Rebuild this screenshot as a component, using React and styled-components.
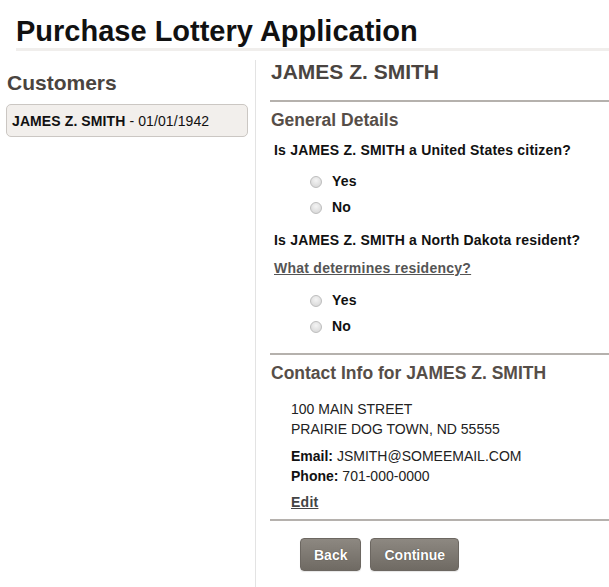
import React from 'react';
import styled, {createGlobalStyle} from 'styled-components';

const GlobalStyle = createGlobalStyle`
  html, body {
    margin: 0;
    padding: 0;
    background: #fff;
  }
  body {
    font-family: "Liberation Sans", Arial, sans-serif;
    font-size: 14px;
    color: #111;
  }
`;

const Page = styled.div`
  display: flex;
  flex-direction: column;
  min-height: 100vh;
`;

const Header = styled.h1`
  margin: 15px 0 0 16px;
  font-size: 29px;
  line-height: 33px;
  font-weight: bold;
  color: #111;
  border-bottom: 3px solid #f0eeec;
`;

const Columns = styled.div`
  flex: 1;
  display: grid;
  grid-template-columns: 256px 1fr;
  margin-top: 9px;
`;

const Sidebar = styled.aside`
  border-right: 1px solid #e3e3e3;
  padding: 11px 7px 0 6px;
`;

const SideTitle = styled.h2`
  margin: 0 0 9px 1px;
  font-size: 21px;
  line-height: 24px;
  color: #4a4440;
`;

const CustomerCard = styled.div`
  border: 1px solid #cbc7c3;
  border-radius: 5px;
  background: #f2efec;
  padding: 8px 5px 6px;
  line-height: 17px;
  font-size: 14px;
  letter-spacing: 0.1px;
  color: #111;

  b {
    font-weight: bold;
  }
`;

const Main = styled.main`
  padding-left: 15px;
`;

const NameHeading = styled.h2`
  margin: 0 0 16px;
  font-size: 21px;
  line-height: 24px;
  color: #4a4440;
`;

const Section = styled.section`
  border-top: 2px solid #b5b1ad;
  margin-left: -1px;
  padding-left: 1px;
  padding-bottom: ${p => p.$pb || 0}px;
`;

const SectionTitle = styled.h3`
  margin: 8px 0 0;
  font-size: 17.5px;
  line-height: 20px;
  color: #564e48;
`;

const Question = styled.p`
  margin: 10px 0 0 3px;
  font-weight: bold;
  line-height: 20px;
  letter-spacing: 0.2px;
`;

const HelpLink = styled.a`
  display: block;
  margin: 8px 0 0 3px;
  line-height: 20px;
  font-weight: bold;
  letter-spacing: 0.25px;
  color: #555;
  text-decoration: underline;
  cursor: pointer;
`;

const RadioGroup = styled.div`
  display: flex;
  flex-direction: column;
  margin: ${p => p.$mt}px 0 7px 39px;
`;

const RadioRow = styled.label`
  display: flex;
  align-items: center;
  gap: 10px;
  height: 26px;
  font-weight: bold;
  letter-spacing: 0.2px;
  cursor: pointer;
`;

const Radio = styled.input.attrs({type: 'radio'})`
  appearance: none;
  margin: 0;
  width: 12px;
  height: 12px;
  border-radius: 50%;
  border: 1px solid #bdbdbd;
  background: radial-gradient(circle at 50% 35%, #f4f4f4 0%, #e0e0e0 60%, #d2d2d2 100%);
  position: relative;
  top: 1px;
`;

const Contact = styled.div`
  margin: 16px 0 0 20px;
`;

const Line = styled.div`
  line-height: 20px;
  color: #222;
  margin-top: ${p => p.$mt || 0}px;

  b {
    color: #111;
  }
`;

const EditLink = styled(HelpLink)`
  margin: 6px 0 0;
  color: #444;
`;

const Actions = styled.div`
  display: flex;
  gap: 9px;
  margin: 17px 0 0 29px;
`;

const Button = styled.button`
  height: 33px;
  padding: 0 13px;
  border: 1px solid #6c6761;
  border-radius: 4px;
  background: linear-gradient(#8d8881, #6f6a63);
  color: #fff;
  font-family: "Liberation Sans", Arial, sans-serif;
  font-size: 14px;
  font-weight: bold;
  text-shadow: 0 0 1px #3a3630;
  box-shadow: 0 1px 1px rgba(0, 0, 0, 0.1);
  cursor: pointer;
`;

const name = 'JAMES Z. SMITH';

const YesNo = ({group, top = 8}) => (
    <RadioGroup $mt={top}>
        <RadioRow><Radio name={group}/>Yes</RadioRow>
        <RadioRow><Radio name={group}/>No</RadioRow>
    </RadioGroup>
);

export default function App() {
    return (
        <Page>
            <GlobalStyle/>
            <Header>Purchase Lottery Application</Header>
            <Columns>
                <Sidebar>
                    <SideTitle>Customers</SideTitle>
                    <CustomerCard><b>{name}</b> - 01/01/1942</CustomerCard>
                </Sidebar>
                <Main>
                    <NameHeading>{name}</NameHeading>
                    <Section $pb={7}>
                        <SectionTitle>General Details</SectionTitle>
                        <Question>Is {name} a United States citizen?</Question>
                        <YesNo group="citizen"/>
                        <Question>Is {name} a North Dakota resident?</Question>
                        <HelpLink>What determines residency?</HelpLink>
                        <YesNo group="resident" top={9}/>
                    </Section>
                    <Section $pb={7}>
                        <SectionTitle>Contact Info for {name}</SectionTitle>
                        <Contact>
                            <Line>100 MAIN STREET</Line>
                            <Line>PRAIRIE DOG TOWN, ND 55555</Line>
                            <Line $mt={7}><b>Email:</b> JSMITH@SOMEEMAIL.COM</Line>
                            <Line><b>Phone:</b> 701-000-0000</Line>
                            <EditLink>Edit</EditLink>
                        </Contact>
                    </Section>
                    <Section>
                        <Actions>
                            <Button>Back</Button>
                            <Button>Continue</Button>
                        </Actions>
                    </Section>
                </Main>
            </Columns>
        </Page>
    );
}
